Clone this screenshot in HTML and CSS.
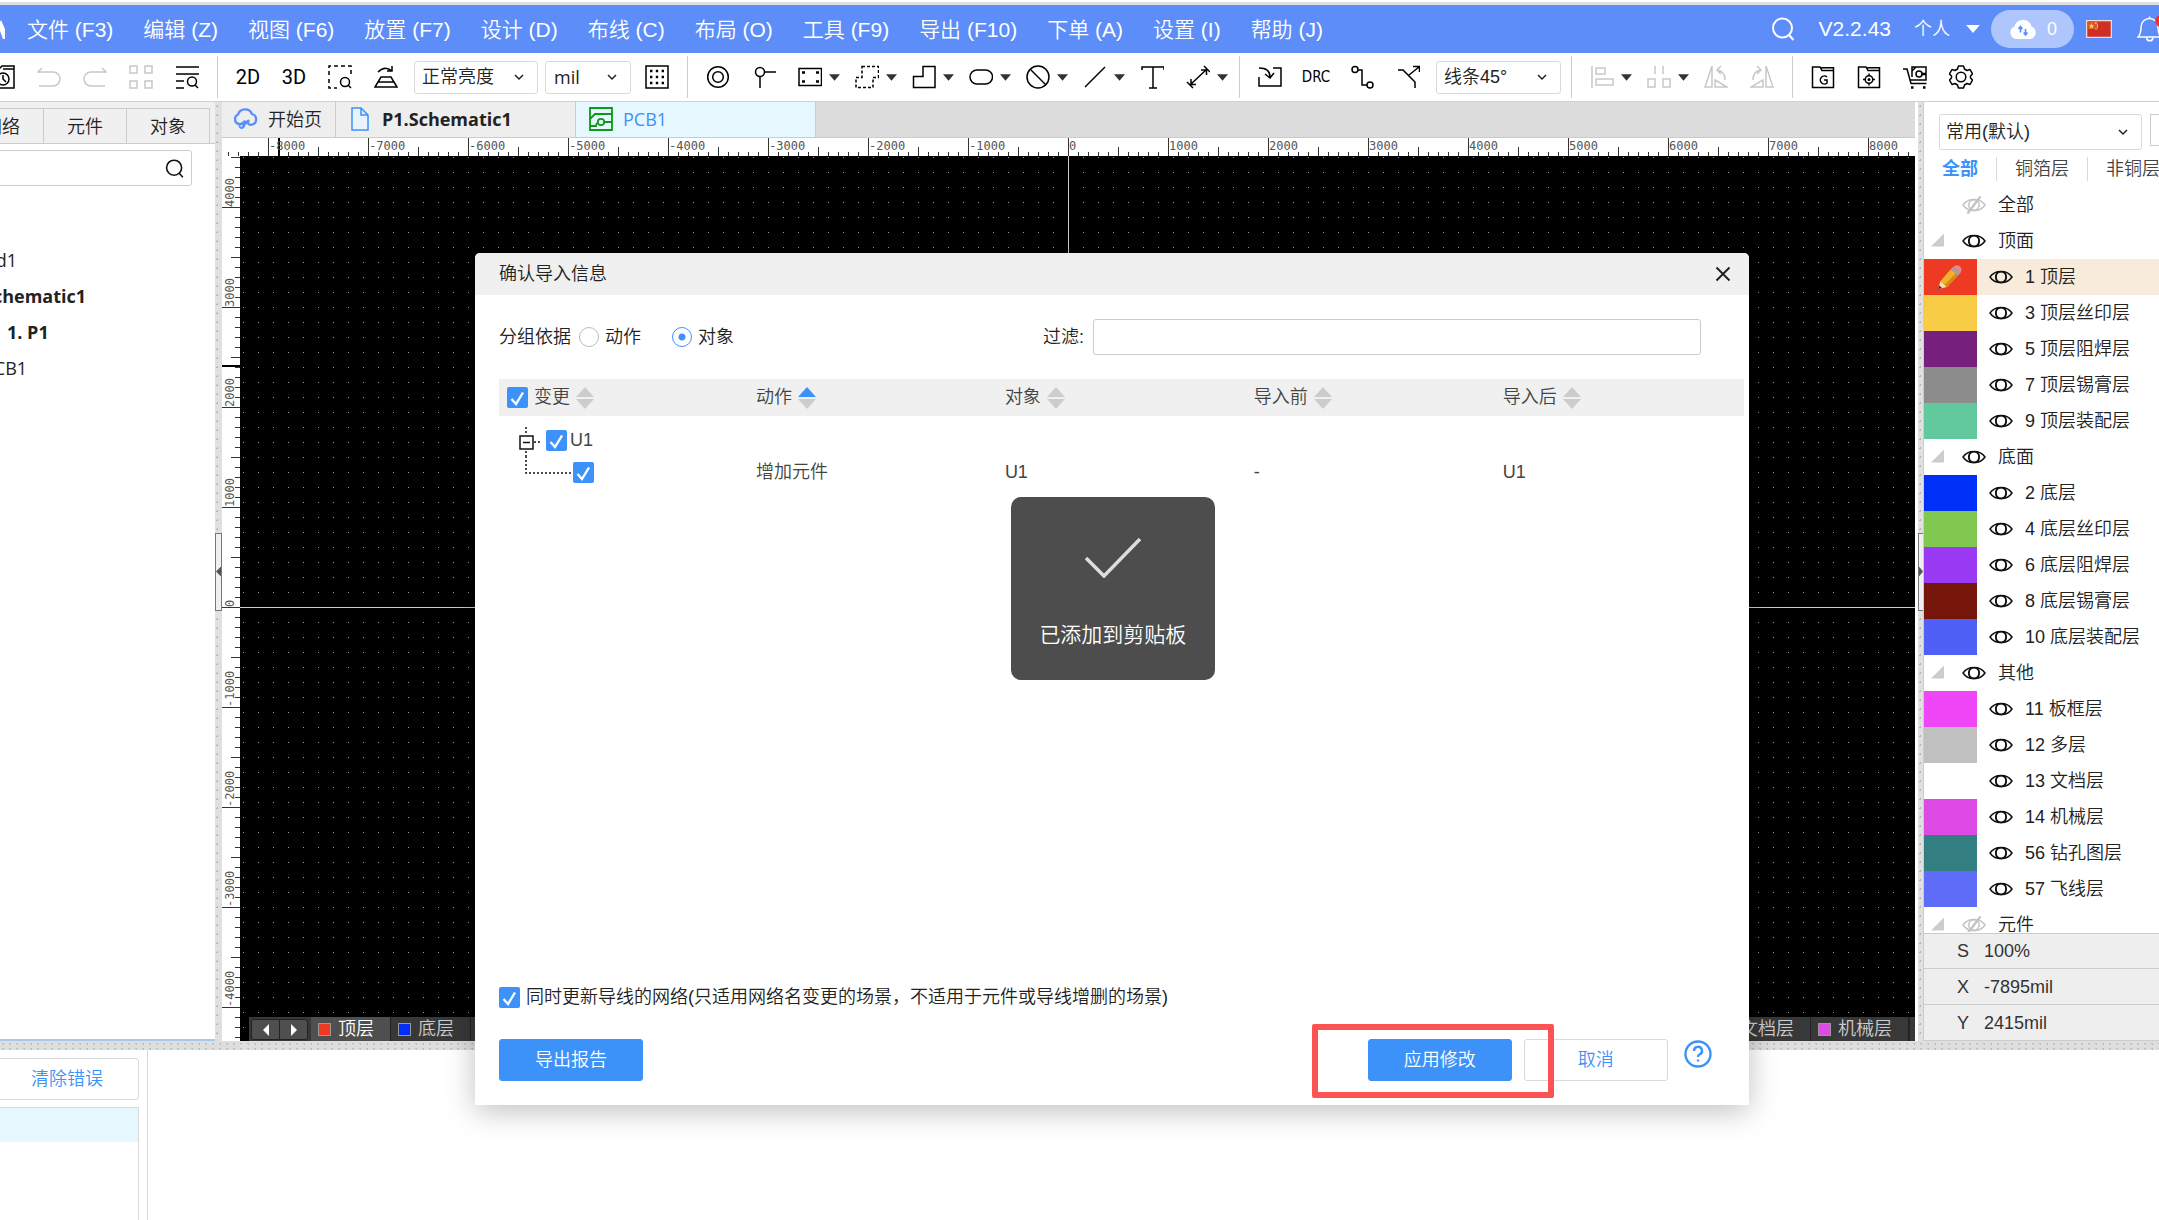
FILE: index.html
```
<!DOCTYPE html>
<html lang="zh-CN">
<head>
<meta charset="utf-8">
<title>PCB1</title>
<link rel="stylesheet" href="styles.css">
</head>
<body>
<svg class="defs" aria-hidden="true">
  <symbol id="eye" viewBox="0 0 24 18"><path d="M1 9C6 1.500 18 1.500 23 9C18 16.500 6 16.500 1 9Z"/><circle cx="12" cy="9" r="5.300"/><path d="M8.500 3.800Q5.500 9 8.500 14.200M15.500 3.800Q18.500 9 15.500 14.200"/></symbol>
  <symbol id="eye-off" viewBox="0 0 24 18"><path d="M1 9C6 1.500 18 1.500 23 9C18 16.500 6 16.500 1 9Z"/><circle cx="12" cy="9" r="5.300"/><path d="M5.500 17.500L18.500 .5" stroke-width="2.400"/></symbol>
  <symbol id="caret" viewBox="0 0 12 7"><path d="M0 0H12L6 7Z" fill="currentColor" stroke="none"/></symbol>
  <symbol id="search" viewBox="0 0 24 24"><circle cx="11.500" cy="11" r="9.500"/><path d="M18 18L22.500 23"/></symbol>
  <symbol id="sort" viewBox="0 0 18 22"><path d="M0 10L9 0L18 10Z" fill="currentColor"/><path d="M0 12H18L9 22Z" fill="#ccc"/></symbol>
</svg>

<header class="menubar">
  <svg class="logo" viewBox="0 0 5 20"><path d="M0 12L3 20H5V10L1 1L0 3Z" fill="#fff" stroke="none"/></svg>
  <nav class="menus">
    <a href="#">文件 (F3)</a><a href="#">编辑 (Z)</a><a href="#">视图 (F6)</a><a href="#">放置 (F7)</a><a href="#">设计 (D)</a><a href="#">布线 (C)</a><a href="#">布局 (O)</a><a href="#">工具 (F9)</a><a href="#">导出 (F10)</a><a href="#">下单 (A)</a><a href="#">设置 (I)</a><a href="#">帮助 (J)</a>
  </nav>
  <div class="account">
    <button class="plain" aria-label="搜索"><svg class="i24"><use href="#search"/></svg></button>
    <span class="version">V2.2.43</span>
    <button class="plain person">个人 <svg class="caret-l"><use href="#caret"/></svg></button>
    <button class="cloud-pill"><svg viewBox="0 0 28 20"><path d="M7 20A6.500 6.500 0 0 1 5.500 7.500A8.700 8.700 0 0 1 22.500 7.500A6.500 6.500 0 0 1 21 20Z" fill="#fff" stroke="none"/><path d="M11.500 13.500V8M9.500 10L11.500 7.500L13.300 10M16.500 10V15.500M14.700 13.500L16.500 16L18.500 13.500" stroke="#5c8df9" stroke-width="1.600"/></svg>0</button>
    <button class="plain" aria-label="中文"><svg class="flag" viewBox="0 0 26 18"><rect x=".5" y=".5" width="25" height="17" fill="#cf2f24" stroke="#f1dcd8"/><path d="M2 2H12V9H2Z" fill="#d9562b" stroke="none"/><path d="M5.500 3L6.300 5.200H8.500L6.700 6.500L7.400 8.800L5.500 7.400L3.600 8.800L4.300 6.500L2.500 5.200H4.700Z" fill="#f8d84b" stroke="none"/><path d="M9 3h1.500M11 5h1M11 7h1M9.500 9h1" stroke="#f8d84b"/></svg></button>
    <button class="plain bell" aria-label="通知"><svg viewBox="0 0 26 26"><path d="M1 21H24C21 18 21 15 21 11A8.500 8.500 0 0 0 4 11C4 15 4 18 1 21ZM9.500 22A3.300 3.300 0 0 0 16 22M12.500 2.500V.5"/><circle cx="24" cy="5" r="6" fill="#fb2c2c" stroke="none"/></svg></button>
  </div>
</header>

<div class="toolbar">
  <div class="tools first">
    <button aria-label="历史"><svg viewBox="0 0 24 24"><path d="M1 4H8L11 1H23V23H1ZM12 4H23"/><circle cx="12" cy="14" r="6"/><path d="M12 10V14L15 17"/></svg></button>
    <button class="off" aria-label="撤销"><svg viewBox="0 0 24 24"><path d="M5 3L1 7H16A7 7 0 0 1 16 21H2"/></svg></button>
    <button class="off" aria-label="重做"><svg viewBox="0 0 24 24"><path d="M19 3L23 7H8A7 7 0 0 0 8 21H22"/></svg></button>
    <button class="off" aria-label="网格"><svg viewBox="0 0 24 24"><path d="M1 1H8V8H1ZM16 1H23V8H16ZM1 16H8V23H1ZM16 16H23V23H16Z"/></svg></button>
    <button aria-label="查找列表"><svg viewBox="0 0 24 24"><path d="M1 2H24M1 9H24M1 16H9M1 23H9M20 20L23 23"/><circle cx="17" cy="16.500" r="4.500"/></svg></button>
  </div>
  <div class="tools">
    <button class="txt">2D</button>
    <button class="txt">3D</button>
    <button aria-label="框选"><svg viewBox="0 0 24 24"><path d="M1 10V1H23V10" stroke-dasharray="4 3"/><path d="M1 14V23H9" stroke-dasharray="4 3"/><circle cx="17" cy="17" r="4.500"/><path d="M20 20L23 23"/></svg></button>
    <button aria-label="翻板"><svg viewBox="0 0 24 24"><path d="M7 12H17L20 17H4ZM4 17L1 22H23L20 17M4 7Q11 0 18 6M18 1V6H13"/></svg></button>
    <select class="bright" aria-label="亮度"><option>正常亮度</option></select>
    <select class="unit" aria-label="单位"><option>mil</option></select>
    <button aria-label="栅格"><svg viewBox="0 0 24 24"><path d="M1 1H23V23H1Z"/><path d="M5 6H20M5 12H20M5 18H20" stroke-width="2.400" stroke-dasharray="2.400 3.400"/></svg></button>
  </div>
  <div class="tools">
    <button aria-label="过孔"><svg viewBox="0 0 24 24"><circle cx="12" cy="12" r="10.300"/><circle cx="12" cy="12" r="5.300"/></svg></button>
    <button aria-label="测试点"><svg viewBox="0 0 24 24"><circle cx="8" cy="7" r="4.500"/><path d="M12.500 7H24M8 11.500V23"/></svg></button>
    <button class="drop" aria-label="焊盘"><svg viewBox="0 0 24 24"><path d="M1 3.500H23.500V20.500H1Z"/><path d="M4 7.500h3M18 7.500h3M4 16.500h3M18 16.500h3" stroke-width="2.600"/></svg><svg class="caret"><use href="#caret"/></svg></button>
    <button class="drop" aria-label="区域"><svg viewBox="0 0 24 24"><path d="M7 1.500H23.500V12.500H18V22.500H1V12.500H7Z" stroke-dasharray="3 2"/></svg><svg class="caret"><use href="#caret"/></svg></button>
    <button class="drop" aria-label="铺铜"><svg viewBox="0 0 24 24"><path d="M11 1.500H23V22.500H1.500V11.500H11Z"/></svg><svg class="caret"><use href="#caret"/></svg></button>
    <button class="drop" aria-label="填充"><svg viewBox="0 0 24 24"><rect x="1" y="5" width="22.500" height="14" rx="7"/></svg><svg class="caret"><use href="#caret"/></svg></button>
    <button class="drop" aria-label="禁止区域"><svg viewBox="0 0 24 24"><circle cx="12" cy="12" r="11"/><path d="M4 4L20 20"/></svg><svg class="caret"><use href="#caret"/></svg></button>
    <button class="drop" aria-label="线条"><svg viewBox="0 0 24 24"><path d="M2 22L22 2"/></svg><svg class="caret"><use href="#caret"/></svg></button>
    <button aria-label="文本"><svg viewBox="0 0 24 24"><path d="M2 5V2H24V5M13 2V23M9 23H17"/></svg></button>
    <button class="drop" aria-label="尺寸"><svg viewBox="0 0 24 24"><path d="M4 20L21 4M1 17L7 23M18 1L24 7M5 14V19.500H10M15 5H20.500V10"/></svg><svg class="caret"><use href="#caret"/></svg></button>
  </div>
  <div class="tools">
    <button aria-label="导入"><svg viewBox="0 0 24 24"><path d="M15 3H23V21H1V12M1 3C8 3 12 6 12 12M7 9L12 13L16 8"/></svg></button>
    <button class="drc">DRC</button>
    <button aria-label="布线"><svg viewBox="0 0 24 24"><circle cx="5" cy="4.500" r="3"/><circle cx="20" cy="20" r="3"/><path d="M8 5H12V20H17"/></svg></button>
    <button aria-label="差分"><svg viewBox="0 0 24 24"><path d="M2 5H7L19 17V23M13 10L23 2M17 1.500H23.500V7"/></svg></button>
    <select class="angle" aria-label="线条角度"><option>线条45°</option></select>
  </div>
  <div class="tools">
    <button class="drop off" aria-label="对齐"><svg viewBox="0 0 24 24"><path d="M2 1V23M6 3H15V9H6ZM6 14H23V20H6Z"/></svg><svg class="caret"><use href="#caret"/></svg></button>
    <button class="drop off" aria-label="分布"><svg viewBox="0 0 24 24"><path d="M8 1V9M16 1V9M1 14H8V22H1ZM16 14H23V22H16Z"/></svg><svg class="caret"><use href="#caret"/></svg></button>
    <button class="off" aria-label="左旋转"><svg viewBox="0 0 24 24"><path d="M8 1V22H1ZM11 15L23 22H11ZM21 15Q21 6 13 5M17 1L13 5L17 9"/></svg></button>
    <button class="off" aria-label="右旋转"><svg viewBox="0 0 24 24"><path d="M16 1V22H23ZM13 15L1 22H13ZM3 15Q3 6 11 5M7 1L11 5L7 9"/></svg></button>
  </div>
  <div class="tools">
    <button aria-label="Gerber"><svg viewBox="0 0 24 24"><path d="M1.500 2H9L11 5.500H22.500V22.500H1.500ZM10 2.800H22.500V5.500M16 12A4 4 0 1 0 16 18V15H13"/></svg></button>
    <button aria-label="坐标文件"><svg viewBox="0 0 24 24"><path d="M1.500 2H9L11 5.500H22.500V22.500H1.500ZM10 2.800H22.500V5.500M12 8.500V11M12 18V20.500M6 14.500H8.500M15.500 14.500H18"/><circle cx="12" cy="14.500" r="3.800"/><circle cx="12" cy="14.500" r=".8"/></svg></button>
    <button aria-label="下单"><svg viewBox="0 0 24 24"><path d="M0 4H4L8 18.500H23.500M7.500 15H23V2H9V12M13 2L9 6"/><circle cx="16" cy="9" r="3"/><path d="M19 9H23M8 22.500h2.500M20 22.500h2.500" stroke-width="2.500"/></svg></button>
    <button aria-label="设置"><svg viewBox="0 0 24 24"><path d="M9.500 1H14.500L15.500 4L18 5.500L21 4.500L23.500 9L21.500 11V13L23.500 15L21 19.500L18 18.500L15.500 20L14.500 23H9.500L8.500 20L6 18.500L3 19.500L.5 15L2.500 13V11L.5 9L3 4.500L6 5.500L8.500 4Z" stroke-linejoin="round"/><circle cx="12" cy="12" r="4.800"/></svg></button>
  </div>
</div>

<main class="workspace">
  <aside class="project">
    <div class="ptabs"><button>网络</button><button>元件</button><button>对象</button></div>
    <div class="psearch"><input type="text" aria-label="过滤工程"><svg><use href="#search"/></svg></div>
    <ul class="ptree">
      <li class="lv1">Board1</li>
      <li class="lv2 b">Schematic1</li>
      <li class="lv3 b">1. P1</li>
      <li class="lv2">PCB1</li>
    </ul>
  </aside>
  <div class="vsplit"><span class="handle left"></span></div>

  <section class="editor">
    <div class="doctabs">
      <a href="#" class="home"><svg viewBox="0 0 24 24"><path d="M5 17A5 5 0 0 1 4 7.500A7.500 7.500 0 0 1 18 7A5.500 5.500 0 0 1 18.500 17.500C14 18.500 13 16 15 13M5 17Q9 17 11 13.500M14 14Q10 17 9.500 20" stroke="#5c8df9" stroke-width="2.300"/><circle cx="7.500" cy="19" r="2" stroke="#5c8df9" stroke-width="1.800"/></svg>开始页</a>
      <a href="#" class="sch"><svg viewBox="0 0 18 24"><path d="M1 1H10L17 8V23H1ZM10 1V8H17" stroke="#3c92f8" fill="#e8f3ff"/></svg>P1.Schematic1</a>
      <a href="#" class="pcb"><svg viewBox="0 0 24 24"><path d="M1 1H23V23H1ZM1 12L6 7H23M1 19H7M15 15H23M7 20V19A4 4 0 0 1 8 16" stroke="#0c9a12" stroke-width="1.800"/><circle cx="12" cy="15" r="3.200" stroke="#0c9a12" stroke-width="1.800"/></svg>PCB1</a>
    </div>
    <div class="hruler"><ol><li>-8000</li><li>-7000</li><li>-6000</li><li>-5000</li><li>-4000</li><li>-3000</li><li>-2000</li><li>-1000</li><li>0</li><li>1000</li><li>2000</li><li>3000</li><li>4000</li><li>5000</li><li>6000</li><li>7000</li><li>8000</li></ol></div>
    <div class="stage">
      <div class="vruler"><ol><li>4000</li><li>3000</li><li>2000</li><li>1000</li><li>0</li><li>-1000</li><li>-2000</li><li>-3000</li><li>-4000</li></ol></div>
      <div class="canvas">
        <div class="layerbar">
          <div class="pager"><button aria-label="前"><svg viewBox="0 0 6 12"><path d="M6 0V12L0 6Z"/></svg></button><button aria-label="后"><svg viewBox="0 0 6 12"><path d="M0 0V12L6 6Z"/></svg></button></div>
          <button class="on"><i class="c-red"></i>顶层</button><button><i class="c-blue"></i>底层</button>
          <span class="fill"></span>
          <button><i></i>文档层</button><button><i class="c-mech"></i>机械层</button>
        </div>
      </div>
    </div>
  </section>

  <div class="vsplit right"><span class="handle right"></span></div>
  <aside class="layers">
    <div class="preset"><select aria-label="图层配置"><option>常用(默认)</option></select><button class="more" aria-label="更多"></button></div>
    <div class="ltabs"><button class="on">全部</button><button>铜箔层</button><button>非铜层</button></div>
    <ul class="llist">
      <li class="grp none"><svg class="e off"><use href="#eye-off"/></svg>全部</li>
      <li class="grp"><svg class="e"><use href="#eye"/></svg>顶面</li>
      <li class="cur"><i class="c-red"><svg viewBox="0 0 24 24"><path d="M0 24L2.500 16L9 22Z" fill="#f6dcae"/><path d="M0 24L1.200 20.500L4 23Z" fill="#333"/><path d="M2.500 16L13 4L20 10.500L9 22Z" fill="#f2b02c"/><path d="M6.500 20L17.500 8.500L20 10.500L9 22Z" fill="#d9881e"/><path d="M13 4L15 2L22 8.500L20 10.500Z" fill="#9aa6ae"/><path d="M15 2Q18 -1 22 1.500Q25 5 22 8.500Z" fill="#e08a8f"/></svg></i><svg class="e"><use href="#eye"/></svg>1 顶层</li>
      <li><i class="c-yellow"></i><svg class="e"><use href="#eye"/></svg>3 顶层丝印层</li>
      <li><i class="c-purple"></i><svg class="e"><use href="#eye"/></svg>5 顶层阻焊层</li>
      <li><i class="c-gray"></i><svg class="e"><use href="#eye"/></svg>7 顶层锡膏层</li>
      <li><i class="c-mint"></i><svg class="e"><use href="#eye"/></svg>9 顶层装配层</li>
      <li class="grp"><svg class="e"><use href="#eye"/></svg>底面</li>
      <li><i class="c-blue"></i><svg class="e"><use href="#eye"/></svg>2 底层</li>
      <li><i class="c-green"></i><svg class="e"><use href="#eye"/></svg>4 底层丝印层</li>
      <li><i class="c-violet"></i><svg class="e"><use href="#eye"/></svg>6 底层阻焊层</li>
      <li><i class="c-maroon"></i><svg class="e"><use href="#eye"/></svg>8 底层锡膏层</li>
      <li><i class="c-royal"></i><svg class="e"><use href="#eye"/></svg>10 底层装配层</li>
      <li class="grp"><svg class="e"><use href="#eye"/></svg>其他</li>
      <li><i class="c-pink"></i><svg class="e"><use href="#eye"/></svg>11 板框层</li>
      <li><i class="c-silver"></i><svg class="e"><use href="#eye"/></svg>12 多层</li>
      <li><i class="c-white"></i><svg class="e"><use href="#eye"/></svg>13 文档层</li>
      <li><i class="c-mech"></i><svg class="e"><use href="#eye"/></svg>14 机械层</li>
      <li><i class="c-teal"></i><svg class="e"><use href="#eye"/></svg>56 钻孔图层</li>
      <li><i class="c-indigo"></i><svg class="e"><use href="#eye"/></svg>57 飞线层</li>
      <li class="grp"><svg class="e off"><use href="#eye-off"/></svg>元件</li>
    </ul>
    <dl class="coords"><div><dt>S</dt><dd>100%</dd></div><div><dt>X</dt><dd>-7895mil</dd></div><div><dt>Y</dt><dd>2415mil</dd></div></dl>
  </aside>
</main>

<div class="hsplit"></div>
<footer class="output">
  <div class="olist"><button>清除错误</button><div class="obox"><div class="osel"></div></div></div>
</footer>

<div class="dialog" role="dialog" aria-labelledby="dlg-title">
  <div class="dhead"><h1 id="dlg-title">确认导入信息</h1><button class="plain" aria-label="关闭"><svg viewBox="0 0 16 16"><path d="M1.500 1.500L14.500 14.500M14.500 1.500L1.500 14.500"/></svg></button></div>
  <div class="dbody">
    <div class="filters">
      <span class="by">分组依据</span>
      <label><input type="radio" name="group">动作</label>
      <label><input type="radio" name="group" checked>对象</label>
      <label class="flt">过滤:<input type="text"></label>
    </div>
    <table>
      <thead><tr>
        <th><label><input type="checkbox" checked>变更</label><svg class="sort"><use href="#sort"/></svg></th>
        <th>动作<svg class="sort asc"><use href="#sort"/></svg></th>
        <th>对象<svg class="sort"><use href="#sort"/></svg></th>
        <th>导入前<svg class="sort"><use href="#sort"/></svg></th>
        <th>导入后<svg class="sort"><use href="#sort"/></svg></th>
      </tr></thead>
      <tbody>
        <tr><td><label class="node"><svg class="tw" viewBox="0 0 27 32"><path d="M7 3V11M7 27V32M15 18H22" stroke-dasharray="2 2"/><rect x="1" y="12" width="13" height="13"/><path d="M4 18.500H11"/></svg><input type="checkbox" checked>U1</label></td><td></td><td></td><td></td><td></td></tr>
        <tr><td><label class="node"><svg class="tw leaf" viewBox="0 0 54 32"><path d="M7 0V17H54" stroke-dasharray="2 2"/></svg><input type="checkbox" checked aria-label="增加元件 U1"></label></td><td>增加元件</td><td>U1</td><td>-</td><td>U1</td></tr>
      </tbody>
    </table>
    <div class="dfoot">
      <label><input type="checkbox" checked>同时更新导线的网络(只适用网络名变更的场景，不适用于元件或导线增删的场景)</label>
      <div class="actions">
        <button class="btn primary">导出报告</button>
        <span class="fill"></span>
        <span class="marked"><button class="btn primary">应用修改</button></span>
        <button class="btn">取消</button>
        <button class="plain help" aria-label="帮助"><svg viewBox="0 0 28 28"><circle cx="14" cy="14" r="12.500"/><path d="M10 11A4 4 0 1 1 15.500 14.500Q14 15.200 14 17M14 19.500V21.500"/></svg></button>
      </div>
    </div>
  </div>
  <div class="toast" role="status"><svg viewBox="0 0 56 40"><path d="M1 20L19 38L55 1"/></svg>已添加到剪贴板</div>
</div>
</body>
</html>
```
FILE: styles.css
```
* { box-sizing: border-box; }
html { --blue: #3c92f8; --sans: "Liberation Sans", "Noto Sans CJK SC", sans-serif; --ui: "Open Sans", "Noto Sans CJK SC", sans-serif; }
body { margin: 0; height: 100vh; overflow: hidden; display: flex; flex-direction: column; border-top: 2px solid #fff; background: #fff; color: #222; font: 350 18px/24px var(--sans); position: relative; }
ul, ol, dl, dd, h1 { margin: 0; padding: 0; list-style: none; font-weight: inherit; }
a { color: inherit; text-decoration: none; }
button, select, input { font: inherit; color: inherit; margin: 0; }
button { border: 0; background: none; padding: 0; }
svg { display: block; fill: none; stroke: currentColor; stroke-width: 1.500; flex: none; }
.defs { position: absolute; width: 0; height: 0; }
.fill { flex: 1; }

.c-red { background: #ee3a22; } .c-yellow { background: #f8cc44; } .c-purple { background: #761f7c; }
.c-gray { background: #8c8c8c; } .c-mint { background: #62c89e; } .c-blue { background: #0030f8; }
.c-green { background: #80c850; } .c-violet { background: #9a3af4; } .c-maroon { background: #76160a; }
.c-royal { background: #4f60f6; } .c-pink { background: #ef47f8; } .c-silver { background: #c0c0c0; }
.c-white { background: #fff; } .c-mech { background: #de4ae6; } .c-teal { background: #337e80; }
.c-indigo { background: #5f6cf8; }

.menubar { flex: none; display: flex; align-items: center; height: 51px; border-top: 3px solid #dfdfdf; background: #5c8df9; color: #fff; font-size: 21px; }
.logo { width: 5px; height: 20px; }
.menus { display: flex; gap: 30px; margin-left: 22px; flex: 1; white-space: nowrap; padding-top: 1px; }
.account { display: flex; align-items: center; }
.i24 { width: 24px; height: 24px; stroke-width: 2; }
.version { margin: 0 23px 0 24px; }
.person { display: flex; align-items: center; gap: 16px; font-size: 18px; }
.caret-l { width: 14px; height: 8px; }
.cloud-pill { display: flex; align-items: center; gap: 10px; width: 83px; height: 38px; margin: 0 12px 0 11px; padding-left: 18px; border-radius: 19px; background: #aec6fc; font-size: 18px; }
.cloud-pill svg { width: 28px; height: 20px; }
.flag { width: 26px; height: 18px; }
.bell { width: 22px; margin-left: 25px; overflow: hidden; }
.bell svg { width: 26px; height: 26px; }

.toolbar { flex: none; display: flex; align-items: center; height: 49px; border-bottom: 1px solid #d0d0d0; color: #000; white-space: nowrap; overflow: hidden; }
.tools { display: flex; align-items: center; height: 42px; padding: 0 7px; border-left: 1px solid #ccc; }
.tools.first { margin-left: -20px; padding-left: 0; border: 0; }
.tools button { display: flex; align-items: center; justify-content: center; width: 46px; height: 36px; }
.tools svg { width: 24px; height: 24px; }
.tools .drop { width: 57px; gap: 7px; padding-left: 7px; }
.tools .caret { width: 11px; height: 7px; color: #333; }
.tools .off { color: #c8c8c8; }
.tools .txt { font: 400 20px/24px Roboto, sans-serif; }
.tools .drc { font: 400 15px/24px "Liberation Sans Narrow", "DejaVu Sans Condensed", sans-serif; }
select { appearance: none; height: 33px; padding: 0 12px; border: 1px solid #d9d9d9; border-radius: 3px; color: #222; background: #fff url("data:image/svg+xml,%3Csvg xmlns='http://www.w3.org/2000/svg' width='10' height='7'%3E%3Cpath d='M1 1L5 5L9 1' fill='none' stroke='%23222' stroke-width='1.500'/%3E%3C/svg%3E") no-repeat right 13px center; }
.tools select { color: #222; }
.bright { width: 124px; margin: 0 7px 0 5px; padding-left: 7px; }
.unit { width: 86px; margin-right: 3px; padding-left: 8px; font-family: var(--ui); font-weight: 400; }
.angle { width: 125px; margin: 0 3px 0 5px; padding-left: 7px; }

.workspace { flex: 1; display: flex; min-height: 0; }
.project { width: 215px; overflow: hidden; border-bottom: 2px solid #a9c8e8; font-family: var(--ui); }
.ptabs { display: flex; height: 42px; padding-top: 6px; margin-left: -39px; background: #f0f0f0; border-bottom: 1px solid #ccc; }
.ptabs button { width: 83px; border-top: 1px solid #ccc; border-right: 1px solid #ccc; }
.psearch { display: flex; align-items: center; width: 252px; height: 36px; margin: 6px 0 0 -60px; padding-right: 7px; border: 1px solid #ccc; border-radius: 3px; color: #111; }
.psearch input { flex: 1; min-width: 0; border: 0; background: none; }
.psearch svg { width: 19px; height: 19px; stroke-width: 2; }
.ptree { margin: 56px 0 0 -60px; line-height: 36px; font-weight: 400; }
.lv1 { padding-left: 16px; } .lv2 { padding-left: 43px; } .lv3 { padding-left: 67px; }
.b { font-weight: 700; }

.vsplit { flex: none; display: flex; align-items: center; width: 7px; background: #e0e0e0 radial-gradient(circle, #b4b4b4 1px, transparent 1px) 0 0 / 5px 9px repeat-y; }
.vsplit.right { width: 9px; border-left: 3px solid #fff; border-right: 1px solid #ccc; }
.handle { width: 7px; height: 78px; background: #f0f0f0; border: 1px solid #777; display: flex; align-items: center; }
.handle.right { width: 5px; border-right: 0; }
.handle::before { content: ""; width: 5px; height: 10px; background: #555; clip-path: polygon(100% 0, 100% 100%, 0 50%); }
.handle.right::before { clip-path: polygon(0 0, 0 100%, 100% 50%); }
.hsplit { flex: none; height: 9px; background: #dedede radial-gradient(circle, #bdbdbd 1px, transparent 1px) 0 0 / 7px 5px; }

.editor { flex: 1; min-width: 0; display: flex; flex-direction: column; }
.doctabs { flex: none; display: flex; height: 36px; background: #dcdcdc; border-bottom: 1px solid #ccc; font-family: var(--ui); }
.doctabs a { display: flex; align-items: center; height: 35px; padding-bottom: 1px; background: #eee; border-right: 1px solid #ccc; }
.doctabs svg { width: 24px; height: 24px; }
.doctabs .home { width: 114px; padding-left: 12px; gap: 10px; }
.doctabs .sch { width: 240px; padding-left: 15px; gap: 13px; font-weight: 700; }
.doctabs .sch svg { width: 18px; }
.doctabs .pcb { width: 240px; padding-left: 13px; gap: 10px; background: #e6f7ff; color: var(--blue); font-weight: 400; }

.hruler { flex: none; height: 18px; padding-left: 46px; overflow: hidden; color: #555;
  background: linear-gradient(#000, #000) 56px 0 / 2px 18px no-repeat,
    linear-gradient(90deg, #333 1px, transparent 1px) 96px 9px / 100px 9px repeat-x,
    linear-gradient(90deg, #333 1px, transparent 1px) 6px 14px / 10px 4px repeat-x; }
.hruler ol, .vruler ol { display: flex; font: 400 12px/16px "DejaVu Sans Mono", monospace; }
.hruler li { flex: none; width: 100px; height: 18px; border-left: 1px solid #333; }
.stage { flex: 1; min-height: 0; display: flex; }
.vruler { flex: none; width: 18px; overflow: hidden; color: #555;
  background: linear-gradient(#000, #000) 0 209px / 18px 2px no-repeat,
    linear-gradient(#333 1px, transparent 1px) 9px 1px / 9px 100px repeat-y,
    linear-gradient(#333 1px, transparent 1px) 13px 1px / 5px 10px repeat-y; }
.vruler ol { flex-direction: column; margin-top: -48px; }
.vruler li { flex: none; width: 18px; height: 100px; border-top: 1px solid #333; writing-mode: vertical-rl; transform: rotate(180deg); }
.canvas { flex: 1; min-width: 0; display: flex; align-items: flex-end; padding-left: 9px;
  background: linear-gradient(#ccc, #ccc) 828px 0 / 1px 100% no-repeat,
    linear-gradient(#ccc, #ccc) 0 451px / 100% 1px no-repeat,
    conic-gradient(from 90deg at 14px 14px, #999 25%, transparent 0) 4px 2px / 15px 15px,
    #000; }
.layerbar { flex: 1; display: flex; height: 24px; background: #383838; color: #ccc; }
.layerbar > button { display: flex; align-items: center; gap: 7px; padding: 0 16px 0 7px; border-right: 1px solid #222; }
.layerbar > button:last-child { margin-right: 5px; border-right-width: 2px; }
.layerbar .on { background: #4f4f4f; color: #fff; }
.layerbar i { width: 13px; height: 13px; border: 1px solid #999; }
.pager { display: flex; width: 57px; height: 21px; margin: 2px 3px 0 2px; border: 1px solid #222; border-radius: 3px; background: #4f4f4f; color: #fff; }
.pager button { flex: 1; display: flex; align-items: center; justify-content: center; }
.pager button + button { border-left: 1px solid #222; }
.pager svg { width: 6px; height: 12px; fill: #fff; stroke: none; }

.layers { flex: none; width: 235px; display: flex; flex-direction: column; overflow: hidden; }
.preset { display: flex; gap: 8px; padding: 12px 0 0 15px; }
.preset select { flex: none; width: 203px; height: 36px; padding-left: 6px; }
.more { flex: none; width: 32px; height: 32px; border: 1px solid #ccc; }
.ltabs { display: flex; align-items: center; height: 37px; flex: none; }
.ltabs button { flex: none; height: 24px; padding: 0 18px; border-right: 1px solid #d9d9d9; color: #444; }
.ltabs button.on { color: var(--blue); font-weight: 700; }
.llist { flex: 1; min-height: 0; overflow: hidden; }
.llist li { display: flex; align-items: center; height: 36px; }
.llist i { width: 53px; height: 36px; padding: 6px 14px; }
.llist i svg { width: 24px; height: 24px; stroke: none; }
.cur { background: #f8ebdb; }
.e { width: 24px; height: 18px; margin: 0 12px; color: #111; }
.e.off { color: #c4c4c4; }
.grp::before { content: ""; width: 13px; height: 13px; margin: 0 6px 2px 7px; background: #ccc; clip-path: polygon(100% 0, 100% 100%, 0 100%); }
.grp.none::before { visibility: hidden; }
.coords { flex: none; margin-top: 1px; border-top: 1px solid #ccc; background: #eee; color: #333; font-weight: 400; }
.coords div { display: flex; height: 36px; align-items: center; padding-left: 33px; border-bottom: 1px solid #ccc; }
.coords div:first-child { height: 35px; }
.coords dt { width: 27px; }

.output { flex: none; height: 170px; overflow: hidden; display: flex; }
.olist { display: flex; flex-direction: column; gap: 7px; width: 148px; padding: 8px 8px 0 0; border-right: 1px solid #d9d9d9; }
.olist button { width: 144px; height: 42px; margin-left: -5px; flex: none; border: 1px solid #d9d9d9; border-radius: 3px; color: var(--blue); }
.obox { flex: 1; border: 1px solid #d9d9d9; border-width: 1px 1px 0 0; }
.osel { height: 34px; background: #e6f7ff; }

.dialog { position: absolute; left: 22%; right: 19%; top: 251px; bottom: 115px; display: flex; flex-direction: column; background: #fff; border-radius: 5px 5px 0 0; box-shadow: 0 6px 30px rgba(0,0,0,.25); }
.dhead { flex: none; display: flex; align-items: center; justify-content: space-between; height: 42px; padding: 0 18px 0 24px; background: #f0f0f0; border-radius: 5px 5px 0 0; }
.dhead h1 { font-size: 18px; line-height: 24px; }
.dhead svg { width: 16px; height: 16px; stroke-width: 2; }
.dbody { flex: 1; display: flex; flex-direction: column; padding: 24px 5px 24px 24px; }
.dbody label { display: flex; align-items: center; }
.filters { display: flex; align-items: center; height: 36px; }
.by { margin-right: 8px; }
.filters label { margin-right: 31px; gap: 6px; }
.filters .flt { flex: 1; margin: 0 43px 0 278px; gap: 9px; }
.flt input { flex: 1; min-width: 0; height: 36px; border: 1px solid #ccc; border-radius: 3px; background: #fff; }
input[type=radio] { appearance: none; width: 20px; height: 20px; border: 1px solid #bbb; border-radius: 50%; background: #fff; }
input[type=radio]:checked { border-color: var(--blue); background: radial-gradient(circle, var(--blue) 3px, #fff 4px); }
input[type=checkbox] { appearance: none; flex: none; width: 21px; height: 21px; border-radius: 2px; background: var(--blue) url("data:image/svg+xml,%3Csvg xmlns='http://www.w3.org/2000/svg' width='21' height='21'%3E%3Cpath d='M4.500 12L9 17L16 5.500' fill='none' stroke='white' stroke-width='2.400'/%3E%3C/svg%3E"); }
table { width: 100%; margin-top: 24px; border-collapse: collapse; table-layout: fixed; color: #444; }
th { height: 37px; padding: 0 0 1px 8px; background: #f0f0f0; font-weight: inherit; text-align: left; line-height: 35px; }
.dbody th label { display: inline-flex; gap: 6px; vertical-align: top; }
.sort { display: inline-block; width: 18px; height: 22px; margin-left: 6px; vertical-align: middle; color: #ccc; stroke: none; }
.sort.asc { color: var(--blue); }
td { height: 32px; padding: 0 0 0 8px; }
tbody::before { content: ""; display: block; height: 8px; }
td label.node { gap: 3px; padding-left: 12px; }
.tw { width: 27px; height: 32px; margin-right: -3px; color: #111; }
.tw.leaf { width: 54px; }
.dfoot { margin-top: auto; }
.dfoot > label { gap: 6px; }
.actions { display: flex; align-items: center; gap: 12px; margin-top: 30px; padding-right: 32px; }
.btn { width: 144px; height: 42px; border: 1px solid #d9d9d9; border-radius: 3px; color: var(--blue); }
.btn.primary { background: var(--blue); border-color: var(--blue); color: #fff; }
.marked { position: relative; }
.marked::after { content: ""; position: absolute; inset: -15px -42px -17px -56px; border: 6px solid #fc5452; border-radius: 2px; pointer-events: none; }
.help { color: var(--blue); margin: 0 0 12px 4px; }
.help svg { width: 28px; height: 28px; stroke-width: 2.400; }
.toast { position: absolute; top: 244px; left: 50%; width: 204px; height: 183px; margin-left: -101px; padding-top: 41px; display: flex; flex-direction: column; align-items: center; gap: 44px; border-radius: 10px; background: #4d4d4d; color: #fff; font-size: 21px; line-height: 26px; }
.toast svg { width: 56px; height: 40px; stroke: #ddd; stroke-width: 3.500; }
```
